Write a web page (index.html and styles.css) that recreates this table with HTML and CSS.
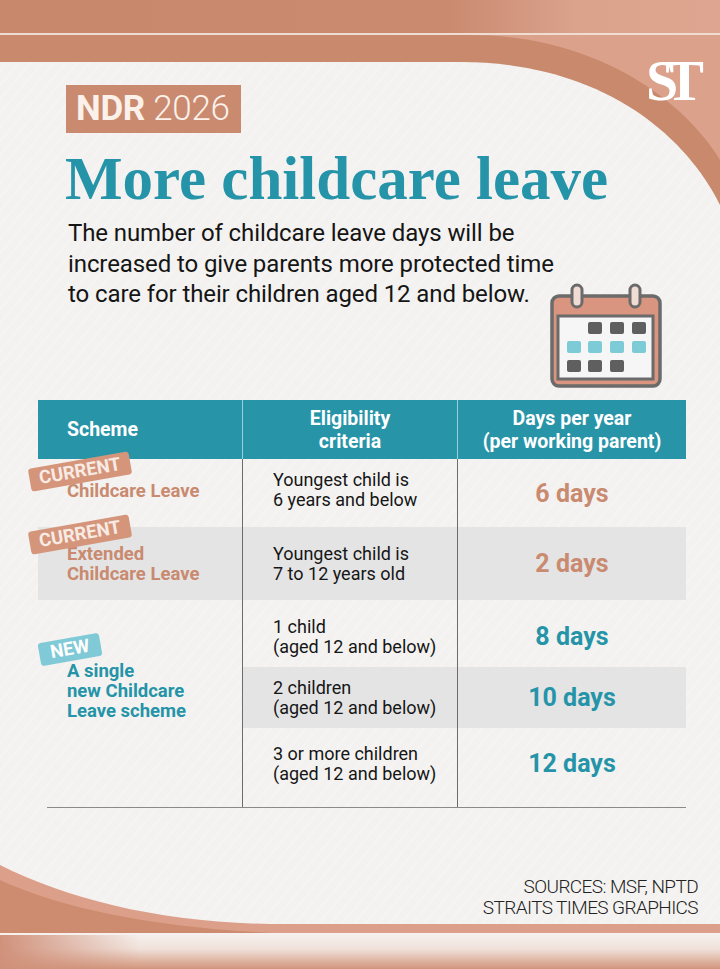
FILE: index.html
```html
<!DOCTYPE html>
<html lang="en">
<head>
<meta charset="utf-8">
<title>NDR 2026 - More childcare leave</title>
<link rel="stylesheet" href="styles.css">
</head>
<body>
<div class="page">
  <svg class="deco" viewBox="0 0 720 969" width="720" height="969" aria-hidden="true">
    <defs>
      <linearGradient id="topg" x1="0" x2="1" y1="0" y2="0">
        <stop offset="0" stop-color="#c7886c"/>
        <stop offset="0.62" stop-color="#c98a6f"/>
        <stop offset="0.8" stop-color="#dba28c"/>
        <stop offset="1" stop-color="#dea590"/>
      </linearGradient>
      <linearGradient id="botg" x1="0" x2="0" y1="0" y2="1">
        <stop offset="0" stop-color="#f5f0ed"/>
        <stop offset="0.4" stop-color="#f0e2db"/>
        <stop offset="1" stop-color="#d2957b"/>
      </linearGradient>
      <linearGradient id="botl" x1="0" x2="1" y1="0" y2="0">
        <stop offset="0" stop-color="#d0917a" stop-opacity="1"/>
        <stop offset="1" stop-color="#d0917a" stop-opacity="0"/>
      </linearGradient>
      <pattern id="stripes" width="9" height="9" patternUnits="userSpaceOnUse" patternTransform="rotate(40)">
        <rect x="0" y="0" width="1.4" height="9" fill="#ffffff" opacity="0.55"/>
      </pattern>
    </defs>
    <rect x="0" y="0" width="720" height="969" fill="#f3f2f0"/>
    <rect x="0" y="0" width="720" height="34" fill="url(#topg)"/>
    <rect x="0" y="33" width="720" height="2" fill="#efdcd2"/>
    <rect x="0" y="35" width="720" height="300" fill="#dca18b"/>
    <path d="M0,35 H470 C590,35 680,95 720,160 V969 H0 Z" fill="#c8896d"/>
    <path d="M0,62 H460 C590,62 680,125 720,205 V969 H0 Z" fill="#f3f2f0"/>
    <path d="M0,62 H460 C590,62 680,125 720,205 V969 H0 Z" fill="url(#stripes)" opacity="0.45"/>
    <path d="M0,865 C70,900 160,922 270,924 H720 V934 H0 Z" fill="#dca08a"/>
    <path d="M0,880 C70,912 170,930 300,934 L0,934 Z" fill="#cd8c70"/>
    <rect x="0" y="933" width="720" height="3" fill="#f6f1ee"/>
    <rect x="0" y="935" width="720" height="34" fill="url(#botg)"/>
    <rect x="0" y="935" width="140" height="34" fill="url(#botl)"/>
  </svg>

  <div class="logo">ST</div>

  <header class="intro">
    <div class="badge"><b>NDR</b> 2026</div>
    <h1 class="title">More childcare leave</h1>
    <div class="lede-row">
      <p class="lede">The number of childcare leave days will be<br>increased to give parents more protected time<br>to care for their children aged 12 and below.</p>
      <svg class="cal" viewBox="0 0 116 110" width="116" height="110" aria-hidden="true">
        <rect x="4" y="17" width="108" height="90" rx="7" fill="#d9957f" stroke="#6b6b6b" stroke-width="3.5"/>
        <rect x="10" y="37" width="95" height="63" fill="#f6f6f6" stroke="#6b6b6b" stroke-width="3"/>
        <rect x="24" y="6" width="10" height="22" rx="5" fill="#f1dcd3" stroke="#6b6b6b" stroke-width="3"/>
        <rect x="82" y="6" width="10" height="22" rx="5" fill="#f1dcd3" stroke="#6b6b6b" stroke-width="3"/>
        <g fill="#5f5f5f">
          <rect x="40" y="43" width="14" height="12" rx="2"/>
          <rect x="62" y="43" width="14" height="12" rx="2"/>
          <rect x="84" y="43" width="14" height="12" rx="2"/>
          <rect x="19" y="81" width="14" height="12" rx="2"/>
          <rect x="40" y="81" width="14" height="12" rx="2"/>
          <rect x="62" y="81" width="14" height="12" rx="2"/>
        </g>
        <g fill="#7ccbd6">
          <rect x="19" y="62" width="14" height="12" rx="2"/>
          <rect x="40" y="62" width="14" height="12" rx="2"/>
          <rect x="62" y="62" width="14" height="12" rx="2"/>
          <rect x="84" y="62" width="14" height="12" rx="2"/>
        </g>
      </svg>
    </div>
  </header>

  <div class="table">
    <div class="th c1">Scheme</div>
    <div class="th c2 center">Eligibility<br>criteria</div>
    <div class="th c3 center">Days per year<br>(per working parent)</div>

    <div class="td c1 r1"><span class="label salmon"><span class="stamp stamp-cur">CURRENT</span>Childcare Leave</span></div>
    <div class="td c2 r1">Youngest child is<br>6 years and below</div>
    <div class="td c3 r1"><span class="days salmon">6 days</span></div>

    <div class="td c1 r2 grey"><span class="label salmon"><span class="stamp stamp-cur">CURRENT</span>Extended<br>Childcare Leave</span></div>
    <div class="td c2 r2 grey">Youngest child is<br>7 to 12 years old</div>
    <div class="td c3 r2 grey"><span class="days salmon">2 days</span></div>

    <div class="td c1 new-cell"><span class="label teal"><span class="stamp stamp-new">NEW</span>A single<br>new Childcare<br>Leave scheme</span></div>
    <div class="td c2 r3">1 child<br>(aged 12 and below)</div>
    <div class="td c3 r3"><span class="days teal">8 days</span></div>

    <div class="td c2 r4 grey">2 children<br>(aged 12 and below)</div>
    <div class="td c3 r4 grey"><span class="days teal">10 days</span></div>

    <div class="td c2 r5">3 or more children<br>(aged 12 and below)</div>
    <div class="td c3 r5"><span class="days teal">12 days</span></div>
  </div>
  <div class="rule"></div>

  <footer class="source">SOURCES: MSF, NPTD<br>STRAITS TIMES GRAPHICS</footer>
</div>
</body>
</html>
```

FILE: styles.css
```css
* { box-sizing: border-box; }
html, body { margin: 0; padding: 0; }
body { background: #f3f2f0; font-family: Roboto, "Noto Sans", sans-serif; color: #161616; }

.page {
  position: relative;
  width: 720px;
  height: 969px;
  overflow: hidden;
}

.deco {
  position: absolute;
  left: 0;
  top: 0;
  z-index: 0;
}

.logo {
  position: absolute;
  left: 646px;
  top: 52px;
  z-index: 2;
  color: #ffffff;
  font-family: "Liberation Serif", "Times New Roman", serif;
  font-weight: 700;
  font-size: 58px;
  line-height: 1;
  letter-spacing: -13px;
  white-space: nowrap;
}

.intro {
  position: relative;
  z-index: 1;
  padding: 85px 56px 0 66px;
}

.badge {
  display: inline-block;
  height: 48px;
  padding: 0 11px 0 10px;
  background: #c98a6f;
  color: #fbf1ea;
  font-size: 35px;
  line-height: 48px;
  font-weight: 300;
  letter-spacing: -0.3px;
}
.badge b { font-weight: 700; }

.title {
  margin: 16px 0 0 -1px;
  font-family: "Liberation Serif", "Times New Roman", serif;
  font-weight: 700;
  font-size: 61px;
  line-height: 60px;
  color: #2594a8;
  letter-spacing: 0;
}

.lede-row {
  display: flex;
  justify-content: space-between;
  align-items: flex-start;
  margin-top: 9px;
}

.lede {
  flex: none;
  white-space: nowrap;
  margin: 0 -40px 0 2px;
  font-size: 24px;
  line-height: 30.5px;
  letter-spacing: -0.1px;
  color: #151515;
}

.cal {
  flex: none;
  margin-top: 61px;
}

.table {
  position: relative;
  z-index: 1;
  margin: 11px 0 0 38px;
  width: 648px;
  display: grid;
  grid-template-columns: 204px 215px 229px;
  grid-template-rows: 59px 68px 73px 67px 61px 79px;
}

.th {
  background: #2794a8;
  color: #ffffff;
  font-weight: 700;
  font-size: 19.5px;
  line-height: 23px;
  display: flex;
  align-items: center;
}
.th.c1 { padding-left: 29px; }
.th.c2, .th.c3 { border-left: 1px solid rgba(255, 255, 255, 0.55); }
.center { justify-content: center; text-align: center; }

.td {
  display: flex;
  align-items: center;
  font-size: 18px;
  line-height: 20px;
}
.td.c1 { padding-left: 29px; }
.td.c2 { padding-left: 30px; border-left: 1.5px solid #6c6c6c; }
.td.c3 { justify-content: center; border-left: 1.5px solid #6c6c6c; }

.grey { background: #e4e4e5; }

.td.r1 { padding-bottom: 6px; }
.td.c1.r1 { padding-bottom: 4px; }
.td.c3.r1 { padding-bottom: 0; padding-top: 2px; }
.td.r3 { padding-top: 6px; }
.td.r5 { padding-bottom: 7px; }

.new-cell { grid-row: 4 / 7; grid-column: 1; padding-bottom: 25px; }

.label {
  position: relative;
  display: block;
  font-weight: 700;
  font-size: 18.5px;
}
.salmon { color: #c98a6f; }
.teal { color: #2594a8; }

.days {
  font-weight: 700;
  font-size: 25px;
  line-height: 28px;
}

.stamp {
  position: absolute;
  height: 23px;
  font-size: 18.5px;
  line-height: 23px;
  font-weight: 700;
  text-align: center;
  border-radius: 3px;
  transform: rotate(-10deg);
}
.stamp-cur {
  left: -38px;
  top: -21px;
  width: 102px;
  background: #d4957b;
  color: #f8ebe4;
}
.stamp-new {
  left: -28px;
  top: -23px;
  width: 62px;
  background: #80c9d6;
  color: #ffffff;
}

.rule {
  position: relative;
  z-index: 1;
  margin-left: 47px;
  width: 639px;
  height: 0;
  border-top: 1.5px solid #8a8a8a;
}

.source {
  position: relative;
  z-index: 1;
  margin-top: 68px;
  padding-right: 22px;
  text-align: right;
  font-size: 19px;
  line-height: 21px;
  font-weight: 300;
  letter-spacing: -0.6px;
  color: #222222;
}
```
